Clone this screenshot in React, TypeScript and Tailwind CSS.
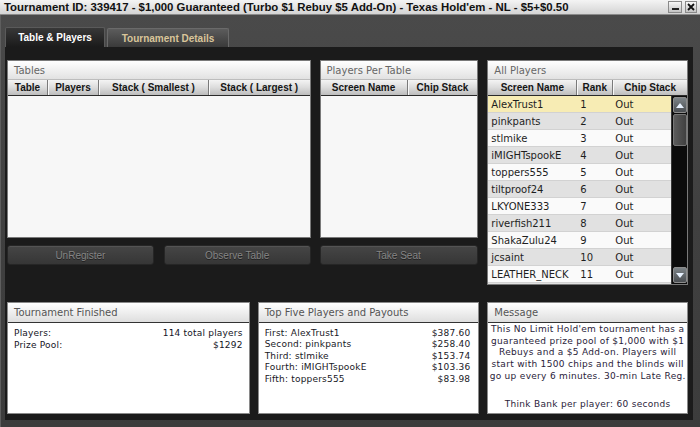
import React from "react";

const players: [string, string][] = [
  ["AlexTrust1", "1"],
  ["pinkpants", "2"],
  ["stlmike", "3"],
  ["iMIGHTspookE", "4"],
  ["toppers555", "5"],
  ["tiltproof24", "6"],
  ["LKYONE333", "7"],
  ["riverfish211", "8"],
  ["ShakaZulu24", "9"],
  ["jcsaint", "10"],
  ["LEATHER_NECK", "11"],
  ["", ""],
];

function ColHead({ cols }: { cols: [string, string][] }) {
  return (
    <div className="flex h-[16px] bg-gradient-to-b from-[#f4f4f4] via-[#dcdcdc] to-[#bdbdbd] border-b border-[#2a2a2a]">
      {cols.map(([label, w], i) => (
        <div
          key={i}
          className={`${w} flex items-center justify-center text-[10px] font-bold text-[#151515] font-['Liberation_Sans'] whitespace-nowrap ${
            i > 0 ? "border-l border-[#7a7a7a] shadow-[inset_1px_0_0_#f8f8f8]" : ""
          }`}
        >
          {label}
        </div>
      ))}
    </div>
  );
}

function PanelHead({ title }: { title: string }) {
  return (
    <div className="h-[19px] flex items-center pl-[6px] bg-gradient-to-b from-[#ffffff] to-[#e2e2e2] text-[10px] text-[#666] font-['DejaVu_Sans'] border-b border-[#bdbdbd]">
      {title}
    </div>
  );
}

function Btn({ label, className }: { label: string; className: string }) {
  return (
    <div
      className={`${className} h-[20px] rounded-[3px] border border-[#262626] bg-gradient-to-b from-[#464646] to-[#363636] shadow-[inset_0_1px_0_#545454] flex items-center justify-center text-[10px] text-[#858585] font-['Liberation_Sans'] [text-shadow:0_1px_0_#202020]`}
    >
      {label}
    </div>
  );
}

function Arrow({ up }: { up: boolean }) {
  return (
    <div className="h-[16px] w-[14px] mx-auto rounded-[2px] border border-[#8c8c8c] bg-gradient-to-b from-[#7d8488] to-[#4a4e52] flex items-center justify-center">
      <svg width="8" height="5" viewBox="0 0 8 5">
        {up ? (
          <polygon points="0,5 8,5 4,0" fill="#e8f2ff" />
        ) : (
          <polygon points="0,0 8,0 4,5" fill="#e8f2ff" />
        )}
      </svg>
    </div>
  );
}

function BottomHead({ title }: { title: string }) {
  return (
    <div className="h-[20px] flex items-center pl-[6px] bg-gradient-to-b from-[#ffffff] to-[#dedede] text-[10px] text-[#555] font-['DejaVu_Sans'] border-b border-[#333]">
      {title}
    </div>
  );
}

export default function App() {
  return (
    <div className="w-[700px] h-[427px] overflow-hidden flex flex-col bg-[#4a4a4a] font-['DejaVu_Sans',sans-serif]">
      {/* Title bar */}
      <div className="h-[15px] flex items-start justify-between bg-gradient-to-b from-[#f4f4f4] to-[#d4d4d4] border-b border-[#8a8a8a] pl-[4px] pr-[3px]">
        <span className="text-[11.4px] leading-[14px] font-bold text-[#111] whitespace-nowrap font-['Liberation_Sans']">
          Tournament ID: 339417 - $1,000 Guaranteed (Turbo $1 Rebuy $5 Add-On) - Texas Hold'em - NL - $5+$0.50
        </span>
        <div className="flex gap-[3px] pt-[1px]">
          <div className="w-[14px] h-[12px] border border-[#8a8a8a] bg-gradient-to-b from-[#f8f8f8] to-[#c4c4c4] flex items-end justify-center pb-[2px]">
            <div className="w-[7px] h-[2px] bg-[#222]" />
          </div>
          <div className="w-[12px] h-[12px] border border-[#8a8a8a] bg-gradient-to-b from-[#f8f8f8] to-[#c4c4c4] flex items-center justify-center">
            <svg width="8" height="8" viewBox="0 0 8 8">
              <path d="M1 1 L7 7 M7 1 L1 7" stroke="#111" strokeWidth="1.8" />
            </svg>
          </div>
        </div>
      </div>

      {/* Body */}
      <div className="flex-1 flex flex-col pl-[4px] pr-[7px] pb-[7px] bg-gradient-to-b from-[#4a4a4a] via-[#404040] to-[#3c3c3c] border-l border-[#5e5e5e]">
        {/* Tabs */}
        <div className="h-[32px] flex items-end gap-[2px]">
          <div className="w-[100px] h-[20px] rounded-t-[2px] border border-b-0 border-[#5a5a5a] bg-gradient-to-b from-[#383838] to-[#1b1b1b] flex items-center justify-center text-[10px] font-bold text-white font-['Liberation_Sans']">
            Table &amp; Players
          </div>
          <div className="w-[122px] h-[19px] rounded-t-[2px] border border-b-0 border-[#6a6a6a] bg-gradient-to-b from-[#5c5c5c] to-[#3a3a3a] flex items-center justify-center text-[10px] font-bold text-[#d9c59a] font-['Liberation_Sans']">
            Tournament Details
          </div>
        </div>

        {/* Dark content */}
        <div className="flex-1 bg-[#1b1b1b] pt-[13px] pl-[2px] pr-[5px]">
          <div className="flex gap-[9px] h-[225px]">
            {/* Tables */}
            <div className="w-[304px] flex flex-col">
              <div className="h-[178px] flex flex-col border border-[#7a7a7a] bg-[#f7f7f7]">
                <PanelHead title="Tables" />
                <ColHead
                  cols={[
                    ["Table", "w-[39px]"],
                    ["Players", "w-[51px]"],
                    ["Stack ( Smallest )", "w-[110px]"],
                    ["Stack ( Largest )", "flex-1"],
                  ]}
                />
              </div>
              <div className="flex gap-[10px] mt-[7px]">
                <Btn label="UnRegister" className="flex-1" />
                <Btn label="Observe Table" className="flex-1" />
              </div>
            </div>
            {/* Players per table */}
            <div className="w-[159px] flex flex-col">
              <div className="h-[178px] flex flex-col border border-[#7a7a7a] bg-[#f7f7f7]">
                <PanelHead title="Players Per Table" />
                <ColHead
                  cols={[
                    ["Screen Name", "w-[86px]"],
                    ["Chip Stack", "flex-1"],
                  ]}
                />
              </div>
              <div className="flex mt-[7px]">
                <Btn label="Take Seat" className="w-[158px]" />
              </div>
            </div>
            {/* All players */}
            <div className="w-[201px] h-[225px] flex flex-col border border-[#7a7a7a] bg-[#f7f7f7]">
              <PanelHead title="All Players" />
              <ColHead
                cols={[
                  ["Screen Name", "w-[88px]"],
                  ["Rank", "w-[36px]"],
                  ["Chip Stack", "flex-1"],
                ]}
              />
              <div className="flex-1 flex overflow-hidden">
                <div className="flex-1 flex flex-col overflow-hidden">
                  {players.map(([name, rank], i) => (
                    <div
                      key={i}
                      className={`h-[17px] shrink-0 flex items-center text-[10px] text-[#1e1e1e] border-b border-[#d2d2d2] ${
                        i === 0 ? "bg-[#f7ecb4]" : i % 2 === 1 ? "bg-[#e1e1e1]" : "bg-[#fafafa]"
                      }`}
                    >
                      <div className="w-[88px] pl-[3px] whitespace-nowrap">{name}</div>
                      <div className="w-[36px] pl-[4px]">{rank}</div>
                      <div className="flex-1 pl-[3px]">{name ? "Out" : ""}</div>
                    </div>
                  ))}
                </div>
                <div className="w-[16px] bg-[#0c0c0c] flex flex-col justify-between py-[1px] border-l border-[#3a3a3a]">
                  <div className="flex flex-col">
                    <Arrow up />
                    <div className="h-[32px] w-[14px] mx-auto mt-[1px] rounded-[2px] border border-[#777] bg-gradient-to-r from-[#5c5c5c] to-[#404040]" />
                  </div>
                  <Arrow up={false} />
                </div>
              </div>
            </div>
          </div>

          {/* Bottom panels */}
          <div className="flex gap-[8px] h-[112px] mt-[17px]">
            <div className="w-[243px] flex flex-col border border-[#8a8a8a] bg-white">
              <BottomHead title="Tournament Finished" />
              <div className="pt-[4px] px-[6px] text-[9px] leading-[12px] text-[#14141e] tracking-[0.2px]">
                <div className="flex justify-between">
                  <span>Players:</span>
                  <span>114 total players</span>
                </div>
                <div className="flex justify-between">
                  <span>Prize Pool:</span>
                  <span>$1292</span>
                </div>
              </div>
            </div>
            <div className="w-[222px] flex flex-col border border-[#8a8a8a] bg-white">
              <BottomHead title="Top Five Players and Payouts" />
              <div className="pt-[5px] pl-[6px] pr-[8px] text-[9px] leading-[11.4px] text-[#181826] tracking-[0.2px]">
                {[
                  ["First: AlexTrust1", "$387.60"],
                  ["Second: pinkpants", "$258.40"],
                  ["Third: stlmike", "$153.74"],
                  ["Fourth: iMIGHTspookE", "$103.36"],
                  ["Fifth: toppers555", "$83.98"],
                ].map(([a, b]) => (
                  <div key={a} className="flex justify-between">
                    <span>{a}</span>
                    <span>{b}</span>
                  </div>
                ))}
              </div>
            </div>
            <div className="w-[201px] flex flex-col border border-[#8a8a8a] bg-white">
              <BottomHead title="Message" />
              <div className="flex-1 flex flex-col justify-between pt-[1px] pb-[2px] text-[9px] leading-[11.7px] text-[#2a1c3a] tracking-[0.3px] text-center whitespace-nowrap">
                <div>
                  This No Limit Hold'em tournament has a
                  <br />
                  guaranteed prize pool of $1,000 with $1
                  <br />
                  Rebuys and a $5 Add-on. Players will
                  <br />
                  start with 1500 chips and the blinds will
                  <br />
                  go up every 6 minutes. 30-min Late Reg.
                </div>
                <div>Think Bank per player: 60 seconds</div>
              </div>
            </div>
          </div>
        </div>
      </div>
    </div>
  );
}
